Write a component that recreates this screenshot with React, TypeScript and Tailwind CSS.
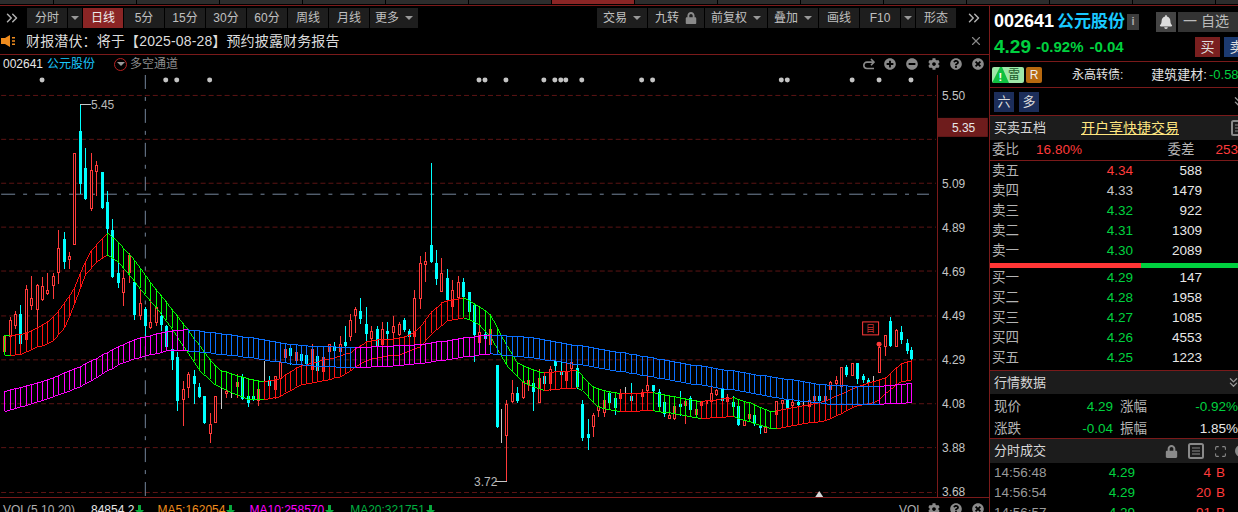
import React from "react";
import { FaBell, FaCog, FaLock, FaMinusCircle, FaPlusCircle, FaQuestionCircle, FaTimesCircle } from "react-icons/fa";
import { ChevronsRight, ChevronsDown, X, Maximize } from "lucide-react";

type C = [number, number, number, number, number, string];
const candles: C[] = [
  [3,337,337,352,356,"r"],[9,318,321,337,340,"r"],[14,312,315,326,330,"r"],[19,306,315,345,347,"c"],[25,285,290,340,350,"r"],
  [30,276,299,306,311,"r"],[36,284,285,310,330,"r"],[41,277,287,300,302,"r"],[46,273,291,294,296,"r"],[52,273,276,285,300,"r"],
  [57,230,248,272,284,"r"],[63,232,239,262,269,"c"],[68,252,256,259,269,"r"],[73,153,153,244,245,"r"],[79,104,131,184,194,"c"],
  [84,148,168,199,200,"c"],[90,153,170,208,211,"r"],[95,161,165,171,196,"r"],[101,172,172,208,209,"c"],[106,191,202,229,233,"c"],
  [111,219,230,277,278,"c"],[117,262,273,283,289,"c"],[122,270,278,293,307,"r"],[128,253,255,272,283,"r"],[133,270,282,316,321,"c"],
  [139,290,304,316,321,"r"],[144,308,310,327,343,"c"],[149,299,323,328,330,"r"],[155,300,308,323,327,"r"],[160,313,317,326,332,"c"],
  [165,326,327,348,350,"c"],[171,347,350,361,371,"c"],[176,353,358,402,412,"c"],[182,382,390,400,427,"r"],[187,373,375,388,399,"r"],
  [193,371,377,385,405,"c"],[198,384,388,398,399,"c"],[203,397,397,424,425,"c"],[209,414,425,434,444,"r"],[214,397,397,423,424,"r"],
  [220,388,396,398,410,"g"],[225,387,392,394,399,"r"],[230,390,396,397,399,"g"],[236,375,383,387,399,"r"],[241,375,378,400,401,"c"],
  [247,397,397,404,408,"c"],[252,395,397,401,402,"c"],[257,390,390,401,407,"r"],[263,362,385,386,383,"g"],[268,377,382,387,391,"c"],
  [274,377,377,390,400,"r"],[279,363,363,379,380,"r"],[285,345,350,358,360,"r"],[290,345,349,357,366,"c"],[296,348,353,361,364,"r"],
  [301,348,355,362,366,"c"],[306,353,356,365,373,"c"],[312,345,350,370,380,"r"],[317,355,357,372,382,"c"],[323,357,358,372,381,"r"],
  [329,345,345,352,360,"r"],[334,343,348,352,354,"c"],[340,337,345,352,357,"r"],[345,327,343,347,362,"c"],[350,315,321,337,342,"r"],
  [355,308,310,316,334,"r"],[360,299,312,320,325,"c"],[366,308,325,335,347,"c"],[371,327,332,339,348,"r"],[377,327,330,347,358,"c"],
  [382,323,330,345,350,"r"],[387,323,332,335,345,"c"],[393,317,327,333,339,"r"],[399,323,325,335,337,"r"],[404,319,321,331,333,"c"],
  [409,330,332,338,343,"c"],[414,291,299,337,340,"r"],[420,256,263,299,310,"r"],[425,252,261,264,282,"r"],[431,163,245,262,263,"c"],
  [436,250,263,279,286,"c"],[441,258,273,292,293,"r"],[447,269,278,301,321,"c"],[452,280,291,307,309,"r"],[458,276,282,298,300,"r"],
  [463,278,282,298,300,"c"],[469,293,293,313,315,"c"],[474,305,306,336,363,"c"],[479,325,333,343,354,"r"],[485,325,335,340,350,"c"],
  [490,320,330,345,347,"r"],[497,366,366,428,429,"c"],[501,410,427,428,444,"g"],[506,401,405,436,482,"r"],[512,381,394,402,404,"r"],
  [517,388,394,402,404,"c"],[523,376,382,398,400,"r"],[528,378,381,385,392,"r"],[533,380,384,393,412,"c"],[539,370,379,403,404,"r"],
  [544,375,377,385,387,"c"],[550,367,370,384,392,"r"],[555,360,362,367,372,"c"],[561,362,373,376,378,"c"],[566,364,373,381,385,"r"],
  [571,362,363,369,372,"r"],[577,360,369,388,390,"c"],[582,401,405,439,442,"c"],[588,420,435,439,451,"c"],[593,414,416,427,438,"r"],
  [598,403,407,411,418,"r"],[604,397,401,413,418,"r"],[609,394,394,404,406,"c"],[615,398,399,409,416,"c"],[620,390,395,399,404,"r"],
  [625,388,392,393,394,"g"],[631,384,397,402,410,"c"],[636,399,400,401,402,"g"],[642,390,393,397,403,"r"],[647,377,386,391,395,"r"],
  [653,386,386,392,394,"c"],[659,390,393,408,410,"c"],[664,400,403,415,418,"c"],[669,410,416,419,420,"r"],[674,407,407,419,421,"r"],
  [680,392,405,408,417,"c"],[685,400,402,406,425,"r"],[690,397,399,411,413,"c"],[696,403,410,415,417,"r"],[701,402,402,406,408,"r"],
  [707,388,401,404,406,"r"],[712,388,394,402,405,"r"],[717,390,391,395,397,"r"],[723,390,390,402,412,"c"],[728,395,398,402,404,"r"],
  [734,397,403,408,418,"c"],[739,407,407,426,427,"c"],[745,415,421,426,427,"r"],[750,413,415,419,421,"r"],[755,414,416,425,427,"c"],
  [761,420,426,429,435,"c"],[766,418,428,433,434,"r"],[771,422,423,424,426,"g"],[777,402,402,415,428,"r"],[783,401,401,404,415,"r"],
  [788,400,400,410,412,"c"],[793,399,403,406,415,"r"],[799,400,403,406,412,"c"],[804,403,405,406,408,"g"],[810,398,401,407,409,"r"],
  [815,390,397,401,404,"r"],[820,397,397,402,404,"c"],[826,392,397,401,418,"r"],[831,382,383,390,400,"r"],[837,377,381,384,395,"r"],
  [842,368,368,387,397,"r"],[847,366,368,376,378,"c"],[853,364,364,376,377,"r"],[858,364,364,380,385,"c"],[864,375,377,381,384,"c"],
  [869,379,381,384,386,"c"],[874,377,378,379,383,"g"],[880,343,348,373,374,"r"],[886,336,336,347,357,"r"],[891,318,322,347,348,"c"],
  [897,330,331,347,348,"r"],[902,327,333,341,345,"c"],[908,340,344,352,355,"c"],[912,348,351,360,361,"c"],
];

type P = [number, number];
const fastU: P[] = [[0,336],[20,335],[33,330],[50,320],[63,303],[72,290],[80,270],[90,250],[106,233],[117,242],[133,260],[155,290],[177,317],[200,348],[217,370],[250,380],[263,382],[277,380],[300,366],[333,358],[350,353],[367,341],[383,340],[407,337],[420,327],[430,313],[442,302],[463,298],[477,305],[490,315],[502,338],[517,363],[533,370],[543,373],[577,371],[590,385],[600,390],[620,394],[653,393],[667,396],[700,402],[733,398],[750,403],[772,412],[783,410],[823,402],[863,385],[887,378],[900,365],[912,361]];
const fastL: P[] = [[0,356],[20,355],[33,348],[50,343],[63,328],[68,317],[78,290],[85,273],[97,260],[106,255],[117,262],[140,290],[167,323],[183,347],[200,373],[217,387],[247,400],[263,400],[277,398],[300,385],[320,382],[343,376],[357,365],[373,358],[400,355],[420,347],[433,332],[447,321],[463,318],[477,323],[490,337],[507,367],[523,383],[543,391],[577,388],[583,392],[597,407],[620,412],[653,411],[667,413],[700,419],[733,417],[750,422],[772,429],[783,428],[830,420],[857,406],[877,403],[887,393],[900,382],[912,380]];
const slowU: P[] = [[0,393],[50,379],[83,365],[117,347],[133,340],[167,331],[187,330],[250,338],[290,345],[317,347],[353,348],[383,347],[420,345],[457,339],[490,335],[500,336],[533,338],[567,344],[617,352],[667,361],[750,374],[830,386],[875,387],[912,384]];
const slowL: P[] = [[0,413],[50,398],[83,385],[117,365],[133,359],[167,351],[187,351],[250,358],[290,364],[317,367],[353,368],[383,367],[420,364],[457,358],[490,354],[500,355],[533,358],[567,363],[617,371],[667,380],[750,393],[783,399],[833,405],[875,405],[912,403]];
const interp = (ps: P[], x: number) => {
  for (let i = 1; i < ps.length; i++) {
    if (x <= ps[i][0]) {
      const [a, b] = ps[i - 1];
      const [c, d] = ps[i];
      return Math.round(b + ((d - b) * (x - a)) / (c - a));
    }
  }
  return ps[ps.length - 1][1];
};
const RED = "#ff1010", GRN = "#00ff00", BLU = "#0a70ff", MAG = "#ff00ff";
const fastRanges: [number, string][] = [[8,GRN],[106,RED],[263,GRN],[463,RED],[543,GRN],[577,RED],[620,GRN],[653,RED],[700,GRN],[733,RED],[772,GRN],[913,RED]];
const slowRanges: [number, string][] = [[187,MAG],[353,BLU],[490,MAG],[875,BLU],[913,MAG]];
const colorAt = (r: [number, string][], x: number) => (r.find((e) => x < e[0]) || r[r.length - 1])[1];
const bandXs = candles.map((c) => c[0]).filter((x) => x <= 912);

function Band({ u, l, ranges }: { u: P[]; l: P[]; ranges: [number, string][] }) {
  return (
    <g>
      {bandXs.map((x, i) => {
        const nx = bandXs[i + 1];
        const col = colorAt(ranges, x);
        return (
          <g key={x} stroke={col} strokeWidth={1}>
            <line x1={x + 0.5} x2={x + 0.5} y1={interp(u, x)} y2={interp(l, x)} />
            {nx !== undefined && <line x1={x + 0.5} x2={nx + 0.5} y1={interp(u, x) + 0.5} y2={interp(u, nx) + 0.5} />}
            {nx !== undefined && <line x1={x + 0.5} x2={nx + 0.5} y1={interp(l, x) + 0.5} y2={interp(l, nx) + 0.5} />}
          </g>
        );
      })}
    </g>
  );
}

const FONT = '"Liberation Sans","Noto Sans CJK SC",sans-serif';
const gridYs = [95, 139, 183, 227, 271, 316, 360, 404, 448, 493];
const axis: [string, number][] = [["5.50",95],["5.09",183],["4.89",227],["4.69",271],["4.49",316],["4.29",360],["4.08",404],["3.88",448],["3.68",492]];
const dots = [41,165,176,209,479,485,506,544,555,561,566,582,642,653,782,788,853,880,912];

function Chart() {
  return (
    <svg width={989} height={425} viewBox="0 73 989 425" className="block" style={{ fontFamily: FONT }}>
      {gridYs.map((y) => (
        <line key={y} x1={0} x2={937} y1={y + 0.5} y2={y + 0.5} stroke="#5c1414" strokeDasharray="5 3" />
      ))}
      <line x1={0} x2={930} y1={194.5} y2={194.5} stroke="#74869c" strokeDasharray="14 8 4 8" />
      <line x1={144.5} x2={144.5} y1={75} y2={497} stroke="#74869c" strokeDasharray="14 8 4 8" />
      {dots.map((x) => (
        <circle key={x} cx={x} cy={80} r={2.5} fill="#c4c4c4" />
      ))}
      <g shapeRendering="crispEdges">
        {candles.map(([x, hi, top, bot, lo, t]) => {
          const col = t === "r" ? "#ff3a3a" : t === "c" ? "#00ffff" : "#c8c8c8";
          return (
            <g key={x}>
              <rect x={x} y={hi} width={1} height={Math.max(lo - hi, 1)} fill={col} />
              {t === "c" && <rect x={x - 1} y={top} width={3} height={bot - top} fill={col} />}
              {t === "r" && <rect x={x - 0.5} y={top + 0.5} width={2} height={bot - top} fill="#000" stroke={col} />}
            </g>
          );
        })}
        <Band u={fastU} l={fastL} ranges={fastRanges} />
        <Band u={slowU} l={slowL} ranges={slowRanges} />
        <line x1={938.5} x2={938.5} y1={75} y2={498} stroke="#7a1a1a" />
        <line x1={79} x2={90} y1={104.5} y2={104.5} stroke="#c8c8c8" />
        <line x1={495} x2={507} y1={482.5} y2={482.5} stroke="#c8c8c8" />
      </g>
      <text x={90} y={109} fontSize={12} fill="#b8b8b8">5.45</text>
      <text x={474} y={487} fontSize={12} fill="#b8b8b8">3.72</text>
      {axis.map(([t, y]) => (
        <text key={t} x={943} y={y + 5} fontSize={12} fill="#c4c4c4">{t}</text>
      ))}
      <rect x={939} y={118} width={50} height={19} fill="#6e1c1c" />
      <text x={953} y={132} fontSize={12} fill="#e8e8e8">5.35</text>
      <rect x={863.5} y={322.5} width={16} height={13} fill="#000" stroke="#ff3a3a" />
      <text x={867} y={333} fontSize={9} fill="#c83030">目</text>
      <circle cx={880} cy={345} r={2.5} fill="#ff3a3a" />
      <polygon points="816,498 820,492 824,498" fill="#d8d8d8" />
    </svg>
  );
}

const Caret = () => <span className="inline-block border-x-[4px] border-t-[4px] border-x-transparent border-t-[#999]" />;

function TB({ w, children, active }: { w: string; children?: React.ReactNode; active?: boolean }) {
  return (
    <div className={`${w} h-[20px] flex items-center justify-center gap-[6px] text-[12px] ${active ? "bg-[#8b2525] text-[#eee]" : "bg-[#1e1e1e] text-[#c0c0c0]"}`}>
      {children}
    </div>
  );
}

const Down = () => (
  <svg width="9" height="10" viewBox="0 0 9 10" className="shrink-0 mx-[1px] mt-[2px]">
    <path d="M3 0h3v5h3L4.5 10 0 5h3z" fill="#08a83c" />
  </svg>
);

const Redo = () => (
  <svg width="13" height="12" viewBox="0 0 13 12" fill="none" stroke="#8a8a8a" strokeWidth="1.6">
    <path d="M12 10.5H5a3.2 3.2 0 0 1 0-6.4h6.5" />
    <path d="M9 1l3 3.1-3 3.1" />
  </svg>
);

function ChartIcons({ first }: { first?: boolean }) {
  const cls = "w-[22px] flex justify-center text-[#8a8a8a]";
  return (
    <div className="flex items-center">
      {first && <div className={cls}><Redo /></div>}
      {first && <div className={cls}><FaPlusCircle size={12} /></div>}
      {first && <div className={cls}><FaMinusCircle size={12} /></div>}
      <div className={cls}><FaCog size={12} /></div>
      <div className={cls}><FaQuestionCircle size={12} /></div>
      <div className={cls}><FaTimesCircle size={12} /></div>
    </div>
  );
}

const Doc = () => (
  <svg width="16" height="16" viewBox="0 0 16 16" className="shrink-0" fill="none" stroke="#8a8a8a">
    <rect x="1" y="1" width="14" height="14" rx="1.5" strokeWidth="2" />
    <path d="M4 5h8M4 8h8M4 11h8" strokeWidth="1" />
  </svg>
);

const book: [string, string, string, string][] = [
  ["卖五","4.34","588","text-[#ff3b3b]"],["卖四","4.33","1479","text-[#c8c8c8]"],["卖三","4.32","922","text-[#00d13f]"],["卖二","4.31","1309","text-[#00d13f]"],["卖一","4.30","2089","text-[#00d13f]"],
];
const book2: [string, string, string][] = [
  ["买一","4.29","147"],["买二","4.28","1958"],["买三","4.27","1085"],["买四","4.26","4553"],["买五","4.25","1223"],
];

function BookRow({ a, b, c, col }: { a: string; b: string; c: string; col: string }) {
  return (
    <div className="h-[20px] shrink-0 flex items-center pl-[2px] text-[13.5px] whitespace-nowrap">
      <span className="w-[111px] text-[#b4b4b4]">{a}</span>
      <span className={`w-[30px] text-right ${col}`}>{b}</span>
      <span className="w-[69px] text-right text-[#e8e8e8]">{c}</span>
    </div>
  );
}

const Line = () => <div className="h-px bg-[#7a1a1a] shrink-0" />;

function Trade({ t, v }: { t: string; v: string }) {
  return (
    <div className="h-[20px] shrink-0 flex items-center pl-[4px] text-[13.5px] whitespace-nowrap">
      <span className="w-[105px] text-[#9a9a9a]">{t}</span>
      <span className="w-[36px] text-right text-[#00d13f]">4.29</span>
      <span className="w-[76px] text-right text-[#ff3b3b]">{v}</span>
      <span className="ml-[5px] text-[#ff3b3b]">B</span>
    </div>
  );
}

export default function App() {
  return (
    <div className="w-[1238px] h-[512px] overflow-hidden bg-black flex flex-col" style={{ fontFamily: FONT }}>
      <div className="h-[5px] shrink-0 flex gap-px -ml-[29px] w-[1300px]">
        {[0,1,2,3,4,5,6,7,8,9,10,11,12,13,14,15].map((i) => (
          <div key={i} className={`w-[82px] h-[4px] shrink-0 ${i === 7 ? "bg-[#8b2525]" : "bg-[#2c2c2c]"}`} />
        ))}
      </div>
      <Line />
      <div className="flex flex-1 min-h-0">
        <div className="w-[990px] shrink-0 border-r border-[#7a1a1a] flex flex-col">
          <div className="h-[22px] shrink-0 pt-[2px] flex items-start justify-between">
            <div className="flex gap-px">
              <div className="w-[26px] h-[20px] flex items-center pl-[3px] text-[#b0b0b0]"><ChevronsRight size={18} strokeWidth={2} /></div>
              <TB w="w-[40px]">分时</TB>
              <TB w="w-[14px]"><Caret /></TB>
              <TB w="w-[40px]" active>日线</TB>
              <TB w="w-[40px]">5分</TB>
              <TB w="w-[40px]">15分</TB>
              <TB w="w-[40px]">30分</TB>
              <TB w="w-[40px]">60分</TB>
              <TB w="w-[40px]">周线</TB>
              <TB w="w-[40px]">月线</TB>
              <TB w="w-[48px]">更多<Caret /></TB>
            </div>
            <div className="flex gap-px">
              <TB w="w-[50px]">交易<Caret /></TB>
              <TB w="w-[56px]">九转<FaLock size={12} className="text-[#8a8a8a]" /></TB>
              <TB w="w-[62px]">前复权<Caret /></TB>
              <TB w="w-[50px]">叠加<Caret /></TB>
              <TB w="w-[40px]">画线</TB>
              <TB w="w-[40px]">F10</TB>
              <TB w="w-[14px]"><Caret /></TB>
              <TB w="w-[40px]">形态</TB>
              <div className="w-[32px] h-[20px] flex items-center pl-[8px] text-[#b0b0b0]"><ChevronsRight size={18} strokeWidth={2} /></div>
            </div>
          </div>
          <div className="h-[26px] shrink-0 flex items-center">
            <svg width="16" height="12" viewBox="0 0 16 12" className="ml-px">
              <path d="M0 3h4l5-3v12L4 9H0z" fill="#f08c1e" />
              <path d="M11 2h3v1.6h-3zM11 5.2h3v1.6h-3zM11 8.4h3V10h-3z" fill="#f08c1e" />
            </svg>
            <span className="ml-[9px] text-[14px] tracking-[0.15px] text-[#dcdcdc] whitespace-nowrap">财报潜伏：将于【2025-08-28】预约披露财务报告</span>
            <span className="ml-auto mr-[6px] text-[#888]"><X size={14} strokeWidth={2} /></span>
          </div>
          <Line />
          <div className="h-[18px] shrink-0 flex items-center text-[12px] whitespace-nowrap">
            <span className="ml-[3px] text-[#e8e8e8]">002641</span>
            <span className="ml-[4px] text-[#19c8ff]">公元股份</span>
            <span className="ml-[19px] w-[13px] h-[13px] rounded-full border border-[#b52020] flex items-center justify-center"><Caret /></span>
            <span className="ml-[3px] text-[#8c8c8c]">多空通道</span>
            <div className="ml-auto"><ChartIcons first /></div>
          </div>
          <Chart />
          <Line />
          <div className="h-[14px] pt-[5px] flex items-start text-[12px] leading-[14px] whitespace-nowrap">
            <span className="ml-[3px] w-[88px] text-[#b0b0b0]">VOL(5,10,20)</span>
            <span className="text-[#e8e8e8]">84854.2</span><Down />
            <span className="ml-[12px] text-[#f08c1e]">MA5:162054</span><Down />
            <span className="ml-[13px] text-[#ff00ff]">MA10:258570</span><Down />
            <span className="ml-[15px] text-[#00b040]">MA20:321751</span><Down />
            <span className="ml-auto text-[#b0b0b0]">VOL</span>
            <ChartIcons />
          </div>
        </div>
        <div className="flex-1 min-w-0 overflow-hidden flex flex-col">
          <div className="h-[55px] shrink-0">
            <div className="flex items-center h-[31px] pl-[4px] whitespace-nowrap">
              <span className="text-[18px] font-bold text-white">002641</span>
              <span className="ml-[3px] text-[17px] font-bold text-[#19c8ff]">公元股份</span>
              <span className="ml-[2px] w-[12px] h-[16px] shrink-0 bg-[#3c3c3c] text-[#aaa] text-[11px] font-bold flex items-center justify-center">i</span>
              <span className="ml-[17px] w-[20px] h-[20px] bg-[#444] text-[#ddd] flex items-center justify-center shrink-0"><FaBell size={14} /></span>
              <span className="ml-[2px] w-[70px] h-[20px] bg-[#333] text-[#bbb] text-[14px] flex items-center pl-[5px] shrink-0">一&nbsp;自选</span>
            </div>
            <div className="flex items-center h-[20px] pl-[4px] whitespace-nowrap font-bold text-[#00d13f]">
              <span className="text-[19px]">4.29</span>
              <span className="ml-[5px] text-[15px]">-0.92%</span>
              <span className="ml-[6px] text-[15px]">-0.04</span>
              <span className="ml-auto w-[25px] h-[20px] bg-[#7a1f1f] text-[#ddd] font-normal text-[14px] flex items-center justify-center shrink-0">买</span>
              <span className="ml-[4px] mr-[-11px] w-[25px] h-[20px] bg-[#1c3a70] text-[#ddd] font-normal text-[14px] flex items-center justify-center shrink-0">卖</span>
            </div>
          </div>
          <Line />
          <div className="h-[25px] shrink-0 flex items-center whitespace-nowrap text-[13px] text-[#e0e0e0]">
            <span className="ml-[2px] w-[32px] h-[16px] rounded-[2px] bg-[#9ee8a8] flex items-center overflow-hidden shrink-0">
              <svg width="17" height="16" viewBox="0 0 17 16" className="shrink-0">
                <path d="M0 16L8 0h2l7 16z" fill="#0fc040" />
                <text x="6.5" y="13.5" fontSize="11" fontWeight="700" fill="#fff">!</text>
              </svg>
              <span className="text-[#1c5a2a] text-[12px] -ml-[1px]">雷</span>
            </span>
            <span className="ml-[2px] w-[16px] h-[16px] rounded-[2px] bg-[#b8690f] text-[#eee] text-[12px] flex items-center justify-center shrink-0">R</span>
            <span className="ml-[30px] text-[12px]">永高转债:</span>
            <span className="ml-[28px]">建筑建材:</span>
            <span className="ml-[2px] text-[#00d13f]">-0.58</span>
          </div>
          <Line />
          <div className="h-[27px] shrink-0 flex items-center gap-[5px] pl-[4px]">
            <span className="w-[20px] h-[20px] bg-[#1c2e5a] text-[#ddd] text-[13px] flex items-center justify-center">六</span>
            <span className="w-[20px] h-[20px] bg-[#1c2e5a] text-[#ddd] text-[13px] flex items-center justify-center">多</span>
            <span className="ml-auto text-[#999] -mr-[8px]"><ChevronsDown size={15} /></span>
          </div>
          <Line />
          <div className="h-[24px] shrink-0 bg-[#1c1c1c] flex items-center pl-[4px] whitespace-nowrap">
            <span className="w-[87px] text-[13px] text-[#d8d8d8]">买卖五档</span>
            <span className="text-[14px] text-[#ffe680] underline">开户享快捷交易</span>
            <span className="ml-auto -mr-[9px]"><Doc /></span>
          </div>
          <div className="h-[20px] shrink-0 flex items-center pl-[2px] text-[13.5px] whitespace-nowrap">
            <span className="w-[45px] text-[#b4b4b4]">委比</span>
            <span className="w-[134px] text-[#ff3b3b]">16.80%</span>
            <span className="w-[49px] text-[#b4b4b4]">委差</span>
            <span className="text-[#ff3b3b]">253</span>
          </div>
          <Line />
          {book.map(([a, b, c, col]) => (
            <BookRow key={a} a={a} b={b} c={c} col={col} />
          ))}
          <div className="h-[5px] shrink-0 mt-[2px] flex">
            <div className="w-[151px] bg-[#ff3535]" />
            <div className="flex-1 bg-[#00d13f]" />
          </div>
          {book2.map(([a, b, c]) => (
            <BookRow key={a} a={a} b={b} c={c} col="text-[#00d13f]" />
          ))}
          <div className="h-[2px] shrink-0" />
          <Line />
          <div className="h-[23px] shrink-0 bg-[#1c1c1c] flex items-center pl-[4px]">
            <span className="text-[13px] text-[#d8d8d8]">行情数据</span>
            <span className="ml-auto text-[#999] -mr-[3px]"><ChevronsDown size={15} /></span>
          </div>
          {[["现价","4.29","涨幅","-0.92%","text-[#00d13f]"],["涨跌","-0.04","振幅","1.85%","text-[#e8e8e8]"]].map(([a, b, c, d, col]) => (
            <div key={a} className="h-[22px] shrink-0 flex items-center pl-[4px] pt-[4px] text-[13.5px] whitespace-nowrap">
              <span className="w-[60px] text-[#b4b4b4]">{a}</span>
              <span className="w-[59px] text-right text-[#00d13f]">{b}</span>
              <span className="ml-[7px] w-[30px] text-[#b4b4b4]">{c}</span>
              <span className={`w-[88px] text-right ${col}`}>{d}</span>
            </div>
          ))}
          <Line />
          <div className="h-[24px] shrink-0 bg-[#1c1c1c] flex items-center pl-[4px] text-[#8a8a8a]">
            <span className="w-[171px] shrink-0 text-[13px] text-[#d8d8d8]">分时成交</span>
            <FaLock size={13} className="shrink-0" />
            <span className="ml-[10px]"><Doc /></span>
            <span className="ml-[10px]"><Maximize size={13} /></span>
            <span className="ml-[8px] w-[12px] h-[12px] rounded-full bg-[#8a8a8a] shrink-0" />
          </div>
          <Trade t="14:56:48" v="4" />
          <Trade t="14:56:54" v="20" />
          <Trade t="14:56:57" v="91" />
        </div>
      </div>
    </div>
  );
}
